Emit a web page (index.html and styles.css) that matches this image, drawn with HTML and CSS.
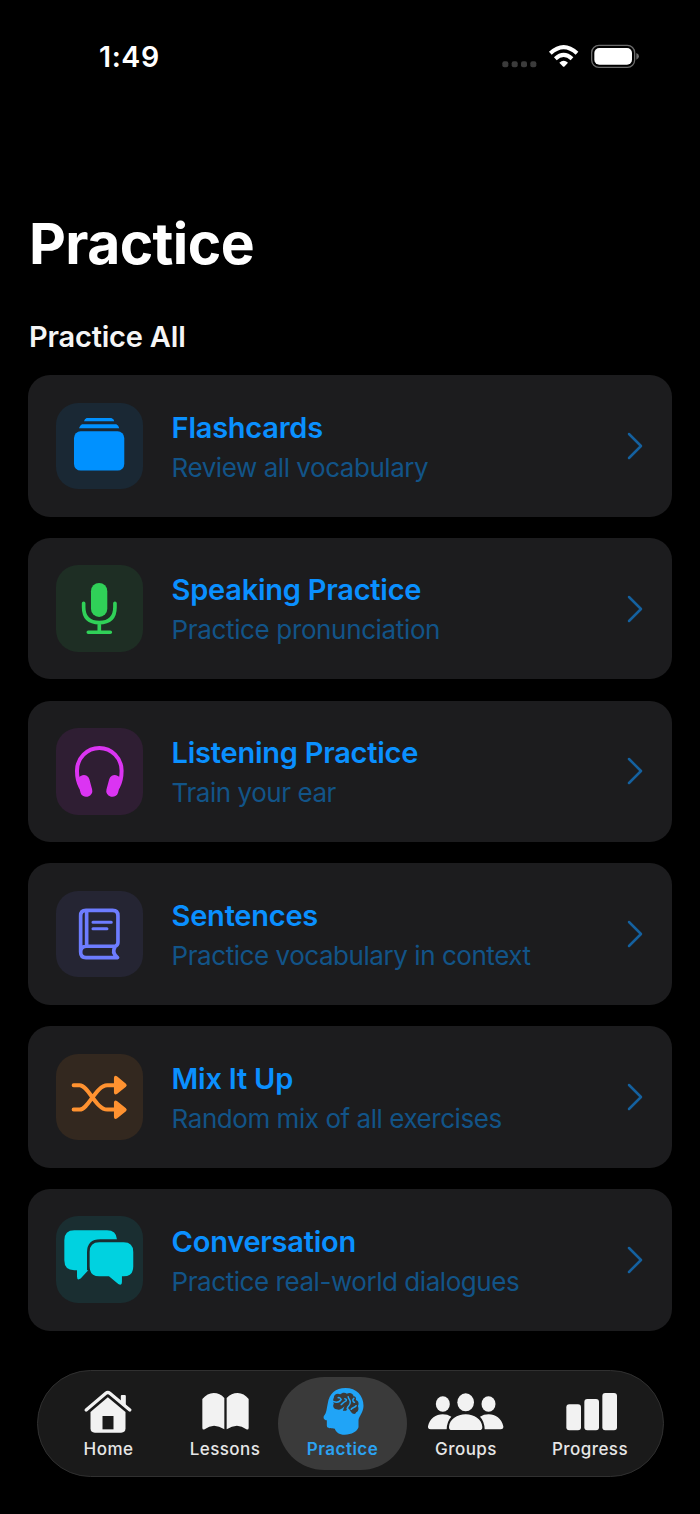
FILE: index.html
```html
<!DOCTYPE html>
<html lang="en">
<head>
<meta charset="utf-8">
<title>Practice</title>
<link rel="stylesheet" href="styles.css">
</head>
<body>
<div class="screen">
  <header class="status">
    <span class="time">1:49</span>
    <svg class="status-icons" viewBox="60 30 426 96" aria-hidden="true">
      <g fill="#3b3b3b"><rect x="67" y="94" width="18" height="18" rx="6"/><rect x="95" y="94" width="18" height="18" rx="6"/><rect x="123" y="94" width="18" height="18" rx="6"/><rect x="151" y="94" width="18" height="18" rx="6"/></g>
      <g fill="none" stroke="#fff" stroke-width="12"><path d="M211 70Q251 33 291 70"/><path d="M226 86Q251 63 276 86"/></g>
      <path d="M238 98Q251 87 264 98L254 109Q251 112 248 109Z" fill="#fff"/>
      <rect x="335" y="46" width="129" height="66" rx="22" fill="none" stroke="#6b6b6b" stroke-width="4"/>
      <rect x="343" y="54" width="113" height="50" rx="15" fill="#fff"/>
      <path d="M469 69Q477 71 477 79T469 89Z" fill="#6b6b6b"/>
    </svg>
  </header>

  <h1 class="title">Practice</h1>
  <h2 class="section">Practice All</h2>

  <main class="cards">
    <a class="card">
      <svg class="tile blue" viewBox="108 98 260 260" aria-hidden="true"><path d="M200 143H274Q282 145 283 153H192Q194 145 200 143ZM186 162H289Q296 165 298 174H177Q180 165 186 162Z"/><rect x="162" y="183" width="151" height="118" rx="20"/></svg>
      <div class="text"><span class="name">Flashcards</span><span class="desc">Review all vocabulary</span></div>
      <svg class="chevron" viewBox="0 0 16 28" aria-hidden="true"><path d="M2 2L14 14L2 26"/></svg>
    </a>
    <a class="card">
      <svg class="tile green" viewBox="18 15 260 260" aria-hidden="true"><rect x="123" y="69" width="49" height="102" rx="24.5"/><path class="line" stroke-width="11" d="M101 130V142Q101 188 148 188T195 142V130M148 190V216M115 217H181"/></svg>
      <div class="text"><span class="name">Speaking Practice</span><span class="desc desc-wide">Practice pronunciation</span></div>
      <svg class="chevron" viewBox="0 0 16 28" aria-hidden="true"><path d="M2 2L14 14L2 26"/></svg>
    </a>
    <a class="card">
      <svg class="tile purple" viewBox="18 18 260 260" aria-hidden="true"><path class="line" stroke-width="12" d="M92 195C84 180 81 165 81 146A67 68 0 0 1 215 146C215 165 212 180 204 195"/><rect x="87" y="159" width="36" height="66" rx="17" transform="rotate(-15 105 192)"/><rect x="173" y="159" width="36" height="66" rx="17" transform="rotate(15 191 192)"/></svg>
      <div class="text"><span class="name">Listening Practice</span><span class="desc">Train your ear</span></div>
      <svg class="chevron" viewBox="0 0 16 28" aria-hidden="true"><path d="M2 2L14 14L2 26"/></svg>
    </a>
    <a class="card">
      <svg class="tile indigo" viewBox="18 19 260 260" aria-hidden="true"><path class="line" stroke-width="11" d="M92 202V93Q92 77 108 77H188Q204 77 204 93V173Q204 182 196 185H110Q92 185 92 202Q92 219 108 219H203Q184 204 195 187M110 79V184"/><path class="line" stroke-width="9" d="M129 113H184M129 132H171"/></svg>
      <div class="text"><span class="name">Sentences</span><span class="desc">Practice vocabulary in context</span></div>
      <svg class="chevron" viewBox="0 0 16 28" aria-hidden="true"><path d="M2 2L14 14L2 26"/></svg>
    </a>
    <a class="card">
      <svg class="tile orange" viewBox="18 18 260 260" aria-hidden="true"><path class="line" stroke-width="12" d="M71 112H89C115 112 138 185 172 185H195M71 185H89C115 185 138 112 172 112H195"/><path d="M192 89Q193 81 201 85L228 107Q233 112 228 116L201 138Q193 142 192 134ZM192 163Q193 155 201 159L228 181Q233 186 228 190L201 212Q193 216 192 208Z"/></svg>
      <div class="text"><span class="name">Mix It Up</span><span class="desc">Random mix of all exercises</span></div>
      <svg class="chevron" viewBox="0 0 16 28" aria-hidden="true"><path d="M2 2L14 14L2 26"/></svg>
    </a>
    <a class="card">
      <svg class="tile cyan" viewBox="18 20 260 260" aria-hidden="true"><path d="M73 63H171Q199 63 201 90H151Q111 90 111 130V183H115L92 208Q81 215 81 202V183H73Q43 183 43 153V93Q43 63 73 63Z"/><path d="M148 99H221Q250 99 250 128V172Q250 201 221 201H216V218Q216 231 205 224L177 201H148Q119 201 119 172V128Q119 99 148 99Z"/></svg>
      <div class="text"><span class="name">Conversation</span><span class="desc">Practice real-world dialogues</span></div>
      <svg class="chevron" viewBox="0 0 16 28" aria-hidden="true"><path d="M2 2L14 14L2 26"/></svg>
    </a>
  </main>

  <nav class="tabs">
    <a class="tab">
      <svg viewBox="115.5 78 240 156" aria-hidden="true"><path d="M180 156L232 112L285 156V205Q285 218 272 218H193Q180 218 180 205Z"/><path d="M216 168H249V208H216Z" fill="#1a1a1a"/><path d="M167 150L226 100Q232 95 238 100L298 150" fill="none" stroke="#1a1a1a" stroke-width="20"/><path d="M271 108Q271 105 274 105H283Q286 105 286 108V139L271 126Z"/><path d="M167 150L226 100Q232 95 238 100L298 150" fill="none" stroke="#f2f2f2" stroke-width="10" stroke-linecap="round"/></svg>
      <span>Home</span>
    </a>
    <a class="tab">
      <svg viewBox="465 78 240 156" aria-hidden="true"><path d="M517 117Q532 99 551 99T583 114V208Q551 187 524 208Q517 211 517 203ZM590 114Q604 99 623 99T656 117V203Q656 211 649 208Q622 187 590 208Z"/></svg>
      <span>Lessons</span>
    </a>
    <a class="tab active">
      <svg viewBox="97.5 78 240 156" aria-hidden="true">
        <path d="M225 84C258 84 279 107 279 137C279 157 265 168 264 181V202C260 215 243 224 223 224C205 224 196 216 193 206C184 204 169 206 169 197V181C160 180 158 174 160 168C169 158 168 147 172 129C176 101 195 84 225 84Z"/>
        <path fill="#3a3a3a" d="M190 113C190 103 201 98 209 103C215 97 224 97 229 101C237 96 249 100 249 109C256 109 258 115 256 120C265 122 266 133 262 138C266 147 263 155 257 157C255 164 247 163 241 155C237 149 235 145 232 144L227 152H217L222 139C213 149 206 151 198 148C188 146 186 136 190 131C187 126 187 117 190 113Z"/>
        <path d="M188 124C197 128 207 127 212 118M203 113C207 112 211 115 212 119M212 134C216 132 218 127 223 125C230 122 229 117 223 116M233 110C234 119 242 120 239 129C238 137 232 137 230 146M250 115C244 119 248 126 252 127M242 148C245 141 254 144 257 137" fill="none" stroke="#20a4f7" stroke-width="4.500" stroke-linecap="round"/>
      </svg>
      <span>Practice</span>
    </a>
    <a class="tab">
      <svg viewBox="48 78 240 156" aria-hidden="true"><ellipse cx="98.500" cy="132" rx="21" ry="23"/><ellipse cx="235.500" cy="132" rx="21" ry="23"/><path d="M54 199C59 175 78 163 98 163Q113 163 124 170Q111 183 110 208H62Q53 208 54 199ZM280 199C275 175 256 163 236 163Q221 163 210 170Q223 183 224 208H272Q281 208 280 199Z"/><ellipse cx="167" cy="127" rx="25" ry="27"/><path d="M117 200C119 178 141 163 167 163S215 178 217 200Q218 210 208 210H126Q116 210 117 200Z"/></svg>
      <span>Groups</span>
    </a>
    <a class="tab">
      <svg viewBox="420 78 240 156" aria-hidden="true"><rect x="469" y="133" width="44" height="78" rx="9"/><rect x="523" y="117" width="44" height="94" rx="9"/><rect x="577" y="99" width="44" height="112" rx="9"/></svg>
      <span>Progress</span>
    </a>
  </nav>
</div>
</body>
</html>
```
FILE: styles.css
```css
* { box-sizing: border-box; }
body { margin: 0; background: #000; font-family: Inter, "Liberation Sans", sans-serif; }
.screen { width: 700px; height: 1514px; padding: 0 28px; background: #000; display: flex; flex-direction: column; overflow: hidden; }

.status { height: 112px; display: flex; justify-content: space-between; padding: 40px 30px 0 71px; color: #fff; }
.time { font-size: 28.500px; line-height: 34px; font-weight: 600; letter-spacing: 0.6px; white-space: nowrap; }
.status-icons { width: 142px; height: 32px; }

.title { margin: 97px 0 0 1px; font-size: 57px; line-height: 70px; font-weight: 700; letter-spacing: -0.6px; color: #fff; align-self: flex-start; }
.section { margin: 38px 0 0 1px; font-size: 29px; line-height: 40px; font-weight: 600; letter-spacing: -0.2px; color: #f5f5f5; align-self: flex-start; }

.cards { display: flex; flex-direction: column; gap: 21.2px; margin-top: 18px; }
.card { height: 141.6px; padding: 0 29px 0 28px; border-radius: 22px; background: #1c1c1e; display: flex; align-items: center; }
.tile { width: 86.6px; height: 86.6px; border-radius: 22px; flex: none; fill: currentColor; }
.line { fill: none; stroke: currentColor; stroke-linecap: round; stroke-linejoin: round; }
.blue { color: #0091ff; background: #1a2834; }
.green { color: #30d158; background: #1e2e24; }
.purple { color: #db34f2; background: #2f1e33; }
.indigo { color: #6d7cff; background: #252533; }
.orange { color: #ff9230; background: #33281f; }
.cyan { color: #00d2e0; background: #1a2e31; }
.text { flex: 1; margin-left: 29px; padding-top: 3.600px; display: flex; flex-direction: column; align-items: flex-start; }
.name { font-size: 29px; line-height: 40px; font-weight: 600; letter-spacing: -0.24px; color: #0a90ff; white-space: nowrap; }
.desc { font-size: 26px; line-height: 40px; font-weight: 400; letter-spacing: -0.45px; color: #125488; white-space: nowrap; }
.desc-wide { letter-spacing: -0.36px; }
.chevron { width: 16px; height: 28px; fill: none; stroke: #15619f; stroke-width: 2.5; stroke-linecap: round; stroke-linejoin: round; }

.tabs { width: 627px; height: 107px; margin: 39.500px 0 0 9px; padding: 6px 7px; border: 1.500px solid #303030; border-radius: 54px; background: #1a1a1a; display: grid; grid-template-columns: 127px 106px 129px 118px 130px; flex: none; }
.tab { height: 93px; padding-top: 9px; border-radius: 46.500px; display: flex; flex-direction: column; align-items: center; color: #e6e6e6; }
.tab svg { width: 80px; height: 52px; flex: none; fill: #f2f2f2; }
.tab span { margin-top: 0.6px; font-size: 17px; line-height: 20px; font-weight: 500; letter-spacing: 0.45px; white-space: nowrap; }
.tab.active { background: #3a3a3a; color: #2ba2f2; }
.tab.active svg { fill: #20a4f7; }
.tab.active span { font-weight: 600; letter-spacing: 0.5px; }
```
